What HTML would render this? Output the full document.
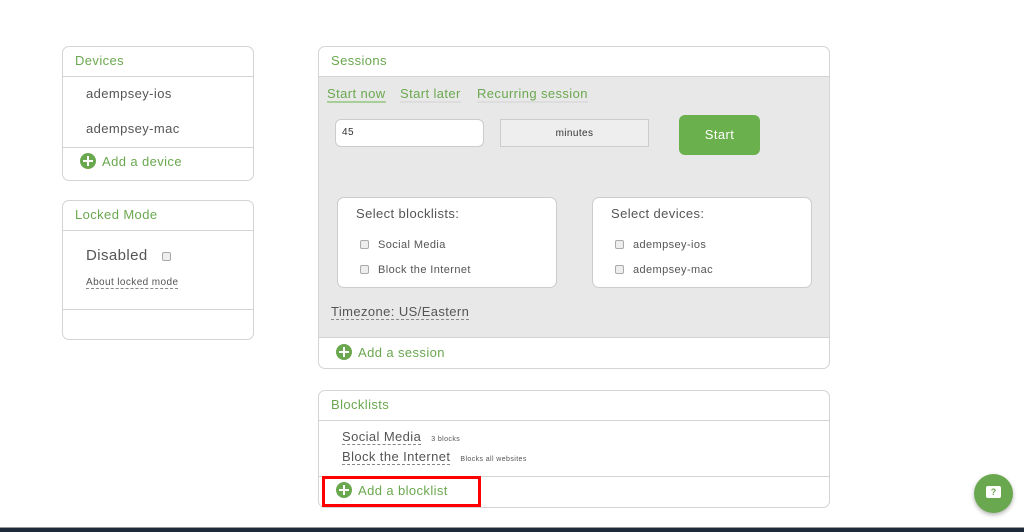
<!DOCTYPE html>
<html><head><meta charset="utf-8"><style>
*{box-sizing:border-box;margin:0;padding:0}
body{width:1024px;height:532px;background:#fff;font-family:"Liberation Sans",sans-serif;position:relative;overflow:hidden;color:#555;letter-spacing:0.4px}
.a{position:absolute}
.panel{position:absolute;border:1px solid #d4d4d4;border-radius:7px;background:#fff;overflow:hidden}
.hd{position:absolute;left:0;right:0;top:0;height:30px;border-bottom:1px solid #d4d4d4;color:#6aa84f;font-size:13px;padding:6px 0 0 12px}
.hr{position:absolute;left:0;right:0;height:1px;background:#d4d4d4}
.t{position:absolute;white-space:nowrap}
.plus{display:inline-block;width:16px;height:16px;border-radius:50%;background:#6aa84f;position:relative;vertical-align:-3px;margin-right:6px}
.plus:before{content:"";position:absolute;left:3px;top:7px;width:10px;height:2px;background:#fff}
.plus:after{content:"";position:absolute;left:7px;top:3px;width:2px;height:10px;background:#fff}
.green{color:#6aa84f}
.cb{display:inline-block;width:9px;height:9px;border:1px solid #aaa;border-radius:2px;background:#eee;vertical-align:-1px;margin-right:9px}
.dash{border-bottom:1px dashed #888}
</style></head><body>

<div class="panel" style="left:62px;top:46px;width:192px;height:135px">
 <div class="hd">Devices</div>
 <div class="t" style="left:23px;top:39px;font-size:13px;color:#555">adempsey-ios</div>
 <div class="t" style="left:23px;top:74px;font-size:13px;color:#555">adempsey-mac</div>
 <div class="hr" style="top:100px"></div>
 <div class="t green" style="left:17px;top:106px;font-size:13px"><span class="plus"></span>Add a device</div>
</div>

<div class="panel" style="left:62px;top:200px;width:192px;height:140px">
 <div class="hd">Locked Mode</div>
 <div class="t" style="left:23px;top:46px;font-size:15px;color:#555">Disabled <span class="cb" style="margin-left:10px"></span></div>
 <div class="t dash" style="left:23px;top:76px;font-size:10px;color:#555">About locked mode</div>
 <div class="hr" style="top:108px"></div>
</div>

<div class="panel" style="left:318px;top:46px;width:512px;height:323px">
 <div class="hd">Sessions</div>
 <div class="a" style="left:0;right:0;top:30px;height:261px;background:#e8e8e8"></div>
 <div class="t green" style="left:8px;top:39px;font-size:13px;border-bottom:2px solid #a8cf98">Start now</div>
 <div class="t green" style="left:81px;top:39px;font-size:13px;border-bottom:2px solid #ddd">Start later</div>
 <div class="t green" style="left:158px;top:39px;font-size:13px;border-bottom:2px solid #ddd">Recurring session</div>
 <div class="a" style="left:16px;top:72px;width:149px;height:28px;background:#fff;border:1px solid #ccc;border-radius:6px;font-size:10px;padding:7px 0 0 6px;color:#333">45</div>
 <div class="a" style="left:181px;top:72px;width:149px;height:28px;background:#eee;border:1px solid #ccc;font-size:10px;text-align:center;padding-top:8px;color:#333">minutes</div>
 <div class="a" style="left:360px;top:68px;width:81px;height:40px;background:#6ab04c;border-radius:6px;color:#fff;font-size:13px;text-align:center;padding-top:12px">Start</div>
 <div class="a" style="left:18px;top:150px;width:220px;height:91px;background:#fff;border:1px solid #ccc;border-radius:7px">
  <div class="t" style="left:18px;top:8px;font-size:13px">Select blocklists:</div>
  <div class="t" style="left:22px;top:41px;font-size:11px"><span class="cb"></span>Social Media</div>
  <div class="t" style="left:22px;top:66px;font-size:11px"><span class="cb"></span>Block the Internet</div>
 </div>
 <div class="a" style="left:273px;top:150px;width:220px;height:91px;background:#fff;border:1px solid #ccc;border-radius:7px">
  <div class="t" style="left:18px;top:8px;font-size:13px">Select devices:</div>
  <div class="t" style="left:22px;top:41px;font-size:11px"><span class="cb"></span>adempsey-ios</div>
  <div class="t" style="left:22px;top:66px;font-size:11px"><span class="cb"></span>adempsey-mac</div>
 </div>
 <div class="t dash" style="left:12px;top:257px;font-size:13px;color:#555">Timezone: US/Eastern</div>
 <div class="hr" style="top:290px"></div>
 <div class="t green" style="left:17px;top:297px;font-size:13px"><span class="plus"></span>Add a session</div>
</div>

<div class="panel" style="left:318px;top:390px;width:512px;height:118px">
 <div class="hd">Blocklists</div>
 <div class="t" style="left:23px;top:38px;font-size:13px"><span class="dash">Social Media</span> <span style="font-size:7px;margin-left:6px">3 blocks</span></div>
 <div class="t" style="left:23px;top:58px;font-size:13px"><span class="dash">Block the Internet</span> <span style="font-size:7px;margin-left:6px">Blocks all websites</span></div>
 <div class="hr" style="top:85px"></div>
 <div class="t green" style="left:17px;top:91px;font-size:13px"><span class="plus"></span>Add a blocklist</div>
</div>
<div class="a" style="left:322px;top:476px;width:159px;height:31px;border:3px solid #f00"></div>

<div class="a" style="left:974px;top:474px;width:39px;height:39px;border-radius:50%;background:#6aa84f;box-shadow:0 2px 4px rgba(0,0,0,.3)">
 <div class="a" style="left:12px;top:12px;width:15px;height:12px;background:#fff;border-radius:2px;font-size:9px;font-weight:bold;color:#6aa84f;text-align:center;line-height:12px;letter-spacing:0">?</div>
</div>

<div class="a" style="left:0;top:527px;width:1024px;height:5px;background:#1e2a3a;border-top:1px solid #999"></div>
</body></html>
